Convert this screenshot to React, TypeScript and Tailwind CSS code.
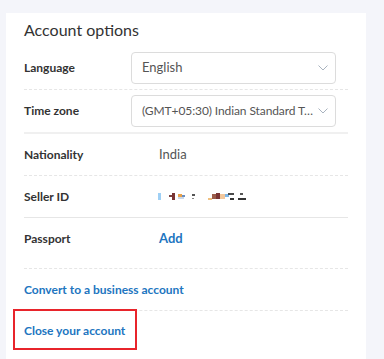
import React from 'react';

const font = { fontFamily: 'Lato, "Noto Sans", sans-serif' };

const Chevron = () => (
  <svg width="10" height="6" viewBox="0 0 10 6" className="shrink-0">
    <path d="M0.5 0.5 L5 5 L9.5 0.5" fill="none" stroke="#a9b3bf" strokeWidth="1" />
  </svg>
);

const Select = ({ value, small = false }: { value: string; small?: boolean }) => (
  <div className="flex items-center justify-between w-[205px] h-[32px] border border-[#dcdcdc] rounded-[4px] pl-[10px] pr-[7px] gap-[2px]">
    <span className={`${small ? 'text-[12px] tracking-[-0.1px]' : 'text-[13px]'} text-[#555] whitespace-nowrap`}>{value}</span>
    <Chevron />
  </div>
);

// blurred seller id, redacted in the source
const Redacted = () => (
  <svg width="92" height="12" viewBox="0 0 92 12">
    <rect x="0" y="2" width="3" height="7" fill="#9fd0f5" />
    <rect x="11" y="4" width="3" height="2" fill="#7a4242" />
    <rect x="14" y="2" width="3" height="7" fill="#7a3434" />
    <rect x="20" y="3" width="4" height="3" fill="#e8a14a" />
    <rect x="24" y="4" width="3" height="2" fill="#6b8fc0" />
    <rect x="20" y="6" width="6" height="2" fill="#c9d7ea" />
    <rect x="34" y="3" width="3" height="2" fill="#555" />
    <rect x="34" y="7" width="2" height="1" fill="#888" />
    <rect x="50" y="7" width="4" height="2" fill="#f0c080" />
    <rect x="54" y="3" width="4" height="5" fill="#9b5d4a" />
    <rect x="58" y="2" width="4" height="6" fill="#7a3434" />
    <rect x="62" y="3" width="5" height="5" fill="#f2c79c" />
    <rect x="67" y="3" width="4" height="3" fill="#7fb6e6" />
    <rect x="70" y="2" width="6" height="2" fill="#4a4a4a" />
    <rect x="72" y="7" width="4" height="2" fill="#333" />
    <rect x="82" y="2" width="3" height="2" fill="#555" />
    <rect x="80" y="7" width="8" height="2" fill="#333" />
  </svg>
);

export default function App() {
  return (
    <div className="w-[384px] h-[359px] bg-[#f4f5fa] overflow-hidden pt-[13px] pl-[6px]" style={font}>
      <div className="relative w-[360px] h-[346px] bg-white px-[18px]">
        <h2 className="pt-[6px] pb-[5px] text-[16px] leading-[22px] text-[#333]">Account options</h2>

        <div className="flex items-center h-[44px] border-b border-dashed border-[#e6e6e6]">
          <div className="w-[107px] text-[12px] font-bold text-[#333]">Language</div>
          <Select value="English" />
        </div>
        <div className="flex items-center h-[44px] border-b-2 border-[#f0f0f0]">
          <div className="w-[107px] text-[12px] font-bold text-[#333]">Time zone</div>
          <Select value="(GMT+05:30) Indian Standard T…" small />
        </div>
        <div className="flex items-center h-[42px] border-b border-dashed border-[#e6e6e6]">
          <div className="w-[135px] text-[12px] font-bold text-[#333]">Nationality</div>
          <span className="text-[13px] text-[#555]">India</span>
        </div>
        <div className="flex items-center h-[42px] border-b border-[#e6e6e6]">
          <div className="w-[134px] text-[12px] font-bold text-[#333]">Seller ID</div>
          <Redacted />
        </div>
        <div className="h-[51px] pt-[1px] border-b border-dashed border-[#e6e6e6]">
          <div className="flex items-center h-[39px]">
            <div className="w-[135px] text-[12px] font-bold text-[#333]">Passport</div>
            <span className="text-[13px] font-bold text-[#2175c0]">Add</span>
          </div>
        </div>
        <div className="flex items-center h-[42px] border-b border-dashed border-[#e6e6e6]">
          <span className="text-[12px] font-bold text-[#2175c0]">Convert to a business account</span>
        </div>
        <div className="flex items-center h-[40px]">
          <span className="text-[12px] font-bold text-[#2175c0]">Close your account</span>
        </div>

        <div className="absolute left-[7px] top-[296px] w-[124px] h-[41px] border-2 border-[#e8242b]" />
      </div>
    </div>
  );
}
